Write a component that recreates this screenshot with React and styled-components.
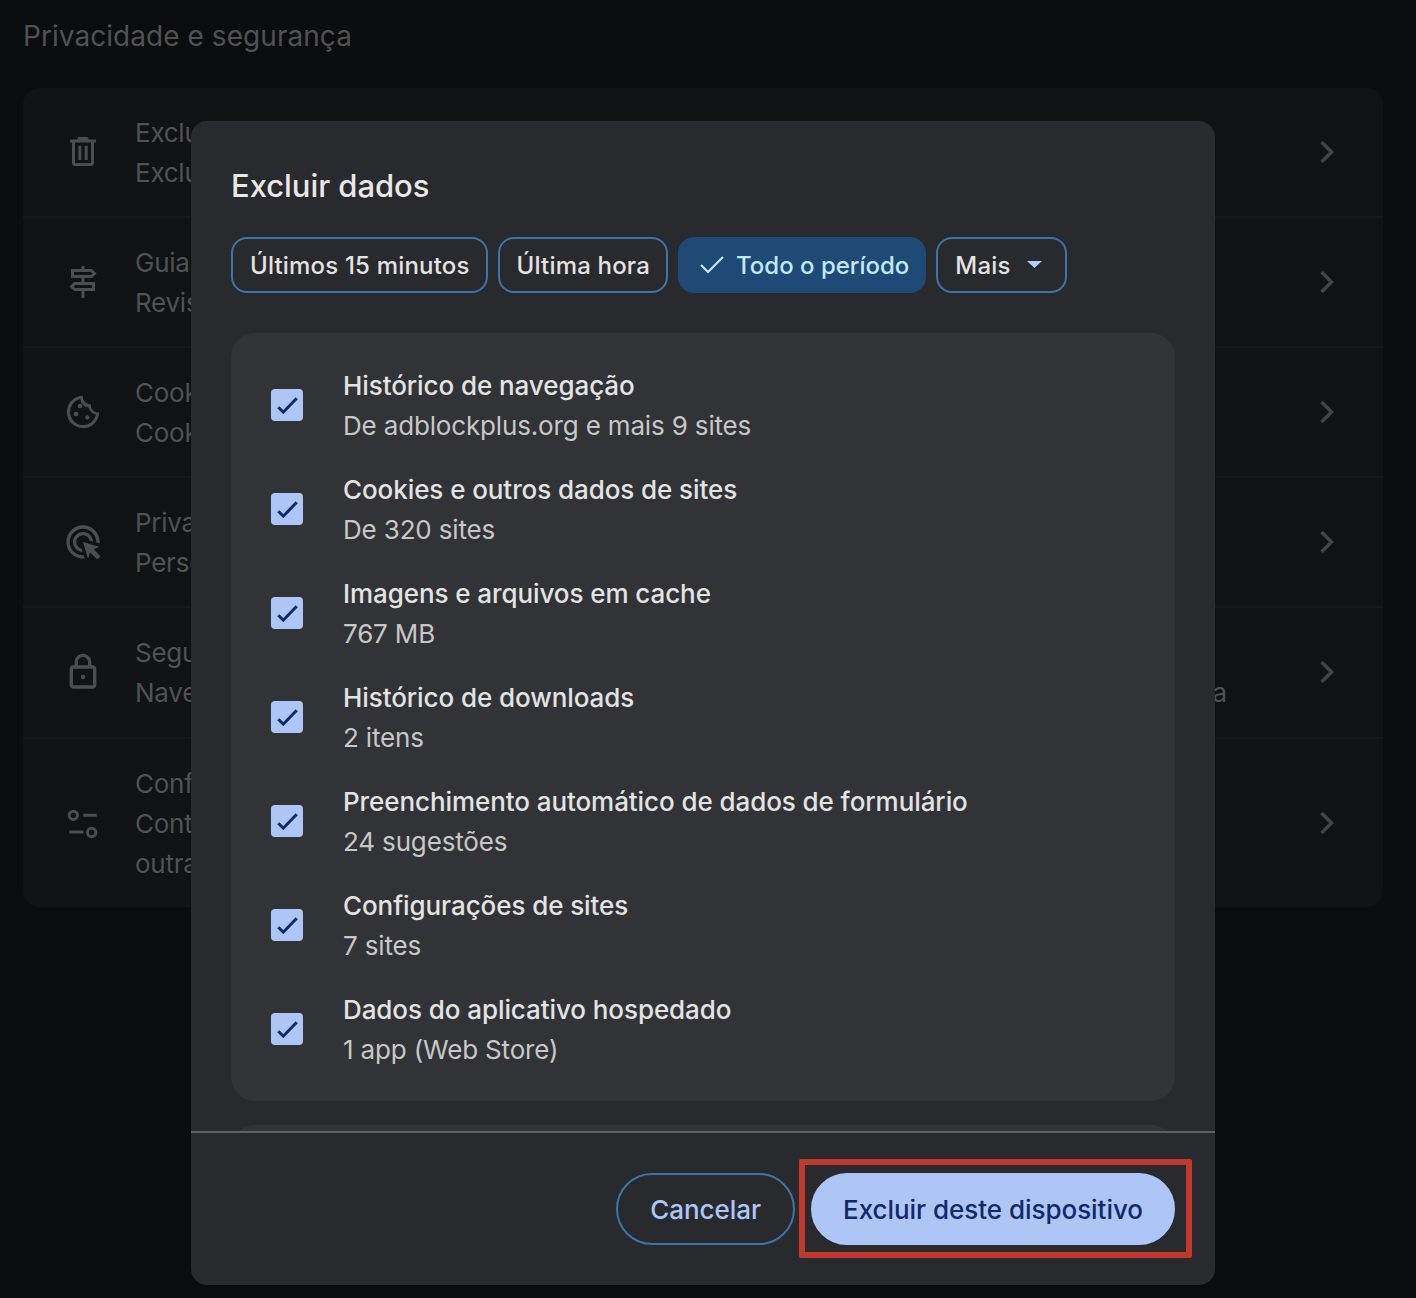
import React from "react";
import styled, { createGlobalStyle } from "styled-components";

const Global = createGlobalStyle`
  html, body { margin: 0; padding: 0; background: #0b0c0e; }
  body { font-family: Inter, "Liberation Sans", sans-serif; -webkit-font-smoothing: antialiased; }
  * { box-sizing: border-box; }
`;

const Page = styled.div`
  position: relative;
  width: 1416px;
  height: 1298px;
  overflow: hidden;
  padding: 16px 33px 0 23px;
  background: #0b0c0e;
`;
const PageTitle = styled.h1`
  margin: 0 0 32px;
  font-size: 28px;
  line-height: 40px;
  font-weight: 400;
  letter-spacing: 0.05px;
  color: #505153;
`;
const Card = styled.section`
  border-radius: 16px;
  background: #111214;
`;
const Row = styled.div`
  display: flex;
  align-items: center;
  padding: 25px 36px 23px 40px;
  gap: 32px;
  & + & { border-top: 2px solid #17181a; }
  &:nth-child(5) { padding-bottom: 24px; }
`;
const RowIcon = styled.svg`
  width: 40px;
  height: 40px;
  flex: none;
  margin-top: -2px;
  fill: #4c4d4f;
`;
const StrokeGroup = styled.g`
  fill: none;
  stroke: #4c4d4f;
  stroke-width: 1.8;
`;
const RowText = styled.div`
  flex: 1;
  min-width: 0;
  font-size: 26px;
  line-height: 40px;
  letter-spacing: -0.25px;
  color: #505153;
`;
const Chevron = styled.svg`
  width: 40px;
  height: 40px;
  flex: none;
  margin-top: -2px;
  fill: none;
  stroke: #434446;
  stroke-width: 2.1;
`;
const Dialog = styled.div`
  position: absolute;
  left: 191px;
  top: 121px;
  width: 1024px;
  height: 1164px;
  display: flex;
  flex-direction: column;
  border-radius: 16px;
  background: #292a2d;
`;
const Header = styled.div`
  padding: 40px 40px 0;
`;
const DialogTitle = styled.h2`
  margin: 0 0 26px;
  font-size: 31px;
  line-height: 50px;
  font-weight: 500;
  letter-spacing: -0.05px;
  color: #e8e8e8;
`;
const Chips = styled.div`
  display: flex;
  gap: 10px;
  margin-bottom: 40px;
`;
const Chip = styled.button`
  display: flex;
  align-items: center;
  height: 56px;
  padding: 2px ${p => (p.$selected ? "15px" : "16px")} 0 17px;
  border: 2px solid ${p => (p.$selected ? "#1f4a75" : "#3f74a4")};
  border-radius: 16px;
  background: ${p => (p.$selected ? "#1f4a75" : "transparent")};
  color: ${p => (p.$selected ? "#c2e7ff" : "#e3e3e3")};
  font: 500 24px/32px Inter, "Liberation Sans", sans-serif;
  letter-spacing: ${p => (p.$selected ? "0" : "0.18px")};
`;
const ChipCheck = styled.svg`
  width: 26px;
  height: 20px;
  margin: -2px 11px 0 2px;
  fill: none;
  stroke: #c2e7ff;
  stroke-width: 2.2;
`;
const Caret = styled.svg`
  width: 15px;
  height: 7px;
  margin: -3px 7px 0 16px;
  fill: #b0ccf8;
`;
const Body = styled.div`
  flex: 1;
  min-height: 0;
  overflow: hidden;
  padding: 0 40px;
`;
const Panel = styled.div`
  display: flex;
  flex-direction: column;
  gap: 24px;
  padding: 33px 40px 31px;
  margin-bottom: 24px;
  border-radius: 24px;
  background: #323337;
`;
const Item = styled.label`
  display: flex;
  align-items: flex-start;
  gap: 40px;
`;
const Box = styled.span`
  width: 32px;
  height: 32px;
  flex: none;
  margin-top: 23px;
  border-radius: 4px;
  background: #adc6f6;
  svg {
    display: block;
    width: 32px;
    height: 32px;
    fill: none;
    stroke: #12296b;
    stroke-width: 3;
  }
`;
const ItemTitle = styled.div`
  font-size: 26px;
  line-height: 40px;
  font-weight: 500;
  letter-spacing: -0.08px;
  color: #e3e3e3;
`;
const ItemSub = styled.div`
  font-size: 26px;
  line-height: 40px;
  letter-spacing: -0.16px;
  color: #c7c7c7;
`;
const Footer = styled.div`
  display: flex;
  justify-content: flex-end;
  gap: 16px;
  padding: 40px;
  border-top: 2px solid #5f6063;
`;
const Button = styled.button`
  height: 72px;
  padding: 2px ${p => (p.$primary ? "30px" : "32px")} 0;
  border-radius: 36px;
  border: 2px solid ${p => (p.$primary ? "#adc6f6" : "#3f74a4")};
  background: ${p => (p.$primary ? "#adc6f6" : "transparent")};
  color: ${p => (p.$primary ? "#12296b" : "#adc6f6")};
  font: 500 26px/32px Inter, "Liberation Sans", sans-serif;
  letter-spacing: -0.04px;
`;
const Highlight = styled.div`
  position: absolute;
  left: 799px;
  top: 1159px;
  width: 393px;
  height: 99px;
  border: 6px solid #c0392b;
  border-radius: 2px;
  pointer-events: none;
`;

const icons = {
  trash: <path fillRule="evenodd" d="M9.400 3h5.200l1 1.500h4.200v1.800H4.200V4.500h4.200zM5.400 6.300h13.200v12.300c0 1-.8 1.800-1.800 1.800H7.200c-1 0-1.800-.8-1.800-1.800zM7.200 6.300v12.300h9.600V6.300zM9.200 8.200H11v8.600H9.200zM13 8.200h1.800v8.600H13z" />,
  sign: <StrokeGroup>
    <path d="M5.700 5.100H17l1.900 1.800L17 8.700H5.700z" />
    <path d="M18.300 12.900H7l-1.900 1.800L7 16.500h11.300z" />
    <path d="M12 2.400v2.700M12 8.700v4.200M12 16.500v5.100" />
  </StrokeGroup>,
  cookie: <g>
    <path fillRule="evenodd" d="M12 2.300a9.700 9.700 0 1 0 9.700 9.900 4.300 4.300 0 0 1-4.900-4.900 4.300 4.300 0 0 1-4.800-5zM10.300 4.200a6 6 0 0 0 5 5.100 6 6 0 0 0 4.500 4.400A7.900 7.900 0 1 1 10.300 4.200z" />
    <circle cx="10.200" cy="8.400" r="1.400" /><circle cx="7.800" cy="13.200" r="1.400" /><circle cx="14.600" cy="15.200" r="1.300" />
  </g>,
  ads: <path d="M11.710 17.990C8.530 17.840 6 15.220 6 12c0-3.310 2.690-6 6-6 3.220 0 5.840 2.530 5.990 5.710l-2.100-.63C15.480 9.310 13.890 8 12 8c-2.210 0-4 1.790-4 4 0 1.890 1.310 3.480 3.080 3.890l.63 2.100zM22 12c0 .3-.01.6-.04.9l-1.970-.59c.01-.1.01-.21.01-.31 0-4.420-3.580-8-8-8s-8 3.580-8 8 3.580 8 8 8c.1 0 .21 0 .31-.01l.59 1.970c-.3.03-.6.04-.9.04-5.520 0-10-4.480-10-10S6.480 2 12 2s10 4.480 10 10zm-3.770 4.260L22 15l-10-3 3 10 1.260-3.770 4.270 4.270 1.980-1.980-4.280-4.260z" />,
  lock: <path d="M18 8h-1V6c0-2.760-2.240-5-5-5S7 3.240 7 6v2H6c-1.100 0-2 .9-2 2v10c0 1.100.9 2 2 2h12c1.100 0 2-.9 2-2V10c0-1.100-.9-2-2-2zM9 6c0-1.660 1.340-3 3-3s3 1.340 3 3v2H9V6zm9 14H6V10h12v10zm-6-3.700a1.300 1.300 0 1 0 0-2.600 1.300 1.300 0 0 0 0 2.600z" />,
  tune: <StrokeGroup>
    <circle cx="6.200" cy="7.400" r="2.500" />
    <circle cx="17.200" cy="17.700" r="2.500" />
    <path d="M12.200 7.400h8M3.800 17.400h8.400" />
  </StrokeGroup>,
};

const rows = [
  { icon: "trash", lines: ["Excluir dados", "Excluir histórico de navegação, cookies, cache e muito mais"] },
  { icon: "sign", lines: ["Guia de privacidade", "Revise os principais controles de privacidade e segurança"] },
  { icon: "cookie", lines: ["Cookies de terceiros", "Cookies de terceiros estão bloqueados no modo de navegação anônima"] },
  { icon: "ads", lines: ["Privacidade de anúncios", "Personalize as informações usadas pelos sites para mostrar anúncios"] },
  { icon: "lock", lines: ["Segurança", "Navegação segura (proteção contra sites perigosos) e outras configurações de segurança"] },
  { icon: "tune", lines: ["Configurações do site", "Controla quais informações os sites podem usar e mostrar (local, câmera, pop-ups e", "outras)"] },
];

const items = [
  ["Histórico de navegação", "De adblockplus.org e mais 9 sites"],
  ["Cookies e outros dados de sites", "De 320 sites"],
  ["Imagens e arquivos em cache", "767 MB"],
  ["Histórico de downloads", "2 itens"],
  ["Preenchimento automático de dados de formulário", "24 sugestões"],
  ["Configurações de sites", "7 sites"],
  ["Dados do aplicativo hospedado", "1 app (Web Store)"],
];

const CheckItem = ({ title, sub }) => (
  <Item>
    <Box><svg viewBox="0 0 32 32"><path d="M7.300 18.200l5 5L25.700 9.300" /></svg></Box>
    <div>
      <ItemTitle>{title}</ItemTitle>
      <ItemSub>{sub}</ItemSub>
    </div>
  </Item>
);

export default function App() {
  return (
    <Page>
      <Global />
      <PageTitle>Privacidade e segurança</PageTitle>
      <Card>
        {rows.map(r => (
          <Row key={r.icon}>
            <RowIcon viewBox="0 0 24 24">{icons[r.icon]}</RowIcon>
            <RowText>{r.lines.map(l => <div key={l}>{l}</div>)}</RowText>
            <Chevron viewBox="0 0 24 24"><path d="M8.700 6l6 6-6 6" /></Chevron>
          </Row>
        ))}
      </Card>
      <Dialog>
        <Header>
          <DialogTitle>Excluir dados</DialogTitle>
          <Chips>
            <Chip>Últimos 15 minutos</Chip>
            <Chip>Última hora</Chip>
            <Chip $selected>
              <ChipCheck viewBox="0 0 26 20"><path d="M2 10l7 7L24 2" /></ChipCheck>
              Todo o período
            </Chip>
            <Chip>
              Mais
              <Caret viewBox="0 0 15 7"><path d="M0 0h15L7.500 7z" /></Caret>
            </Chip>
          </Chips>
        </Header>
        <Body>
          <Panel>
            {items.map(([t, s]) => <CheckItem key={t} title={t} sub={s} />)}
          </Panel>
          <Panel>
            <CheckItem title="Senhas e chaves de acesso" sub="Nenhuma" />
          </Panel>
        </Body>
        <Footer>
          <Button>Cancelar</Button>
          <Button $primary>Excluir deste dispositivo</Button>
        </Footer>
      </Dialog>
      <Highlight />
    </Page>
  );
}
